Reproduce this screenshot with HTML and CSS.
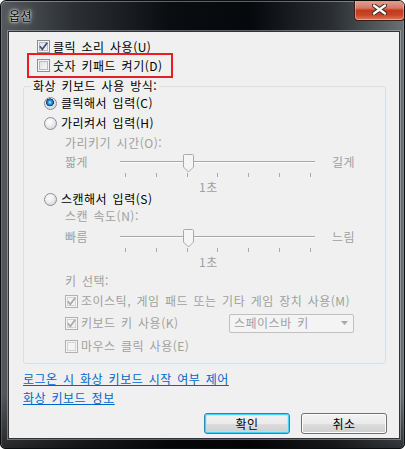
FILE: index.html
```html
<!DOCTYPE html>
<html lang="ko">
<head>
    <meta charset="UTF-8">
    <title>옵션</title>
    <link rel="stylesheet" href="styles.css">
</head>
<body>

    <div class="window">
        <div class="titlebar">
            <span class="title">옵션</span>
            <button class="close" type="button">
                <svg width="15" height="11" viewBox="0 0 15 11">
                    <path d="M2 1.5 L13 9.5 M13 1.5 L2 9.5" stroke="#3a2a28" stroke-width="4.4" stroke-linecap="round"/>
                    <path d="M2 1.5 L13 9.5 M13 1.5 L2 9.5" stroke="#ffffff" stroke-width="2.4" stroke-linecap="round"/>
                </svg>
            </button>
        </div>

        <div class="client">
            <div class="cb-row first">
                <span class="box"><svg width="11" height="11" viewBox="0 0 11 11"><path d="M1.8 5.2 L4.3 8.3 L9.2 1.8" class="tick"/></svg></span>
                <span>클릭 소리 사용(U)</span>
            </div>

            <div class="highlight">
                <span class="box"></span>
                <span>숫자 키패드 켜기(D)</span>
            </div>

            <fieldset class="group">
                <legend>화상 키보드 사용 방식:</legend>

                <div class="radio-row">
                    <span class="radio on"></span>
                    <span>클릭해서 입력(C)</span>
                </div>
                <div class="radio-row">
                    <span class="radio"></span>
                    <span>가리켜서 입력(H)</span>
                </div>
                <div class="sub label-row">가리키기 시간(O):</div>
                <div class="sub slider-row">
                    <span class="end-label">짧게</span>
                    <div class="track">
                        <svg class="thumb" width="11" height="19" viewBox="0 0 11 19">
                            <path d="M1.5 0.5 H9.5 Q10.5 0.5 10.5 1.5 V13 L5.5 18 L0.5 13 V1.5 Q0.5 0.5 1.5 0.5 Z" fill="#f5f5f5" stroke="#a9a9a9"/>
                        </svg>
                    </div>
                    <span class="end-label right">길게</span>
                </div>
                <div class="ticks"><i></i><i></i><i></i><i></i><i></i><i></i><i></i></div>
                <div class="value">1초</div>

                <div class="radio-row short">
                    <span class="radio"></span>
                    <span>스캔해서 입력(S)</span>
                </div>
                <div class="sub label-row tall">스캔 속도(N):</div>
                <div class="sub slider-row">
                    <span class="end-label">빠름</span>
                    <div class="track">
                        <svg class="thumb" width="11" height="19" viewBox="0 0 11 19">
                            <path d="M1.5 0.5 H9.5 Q10.5 0.5 10.5 1.5 V13 L5.5 18 L0.5 13 V1.5 Q0.5 0.5 1.5 0.5 Z" fill="#f5f5f5" stroke="#a9a9a9"/>
                        </svg>
                    </div>
                    <span class="end-label right">느림</span>
                </div>
                <div class="ticks"><i></i><i></i><i></i><i></i><i></i><i></i><i></i></div>
                <div class="value">1초</div>

                <div class="sub key-label">키 선택:</div>
                <div class="sub cb-row off joy">
                    <span class="box"><svg width="11" height="11" viewBox="0 0 11 11"><path d="M1.8 5.2 L4.3 8.3 L9.2 1.8" class="tick"/></svg></span>
                    <span>조이스틱, 게임 패드 또는 기타 게임 장치 사용(M)</span>
                </div>
                <div class="sub cb-row off kbd">
                    <span class="cb-part">
                        <span class="box"><svg width="11" height="11" viewBox="0 0 11 11"><path d="M1.8 5.2 L4.3 8.3 L9.2 1.8" class="tick"/></svg></span>
                        <span>키보드 키 사용(K)</span>
                    </span>
                    <div class="combo">
                        <span>스페이스바 키</span>
                        <svg width="7" height="4" viewBox="0 0 7 4"><path d="M0 0 H7 L3.5 4 Z" fill="#a8a8a8"/></svg>
                    </div>
                </div>
                <div class="sub cb-row off mouse">
                    <span class="box"></span>
                    <span>마우스 클릭 사용(E)</span>
                </div>
            </fieldset>

            <div class="links">
                <a href="#">로그온 시 화상 키보드 시작 여부 제어</a>
                <a href="#">화상 키보드 정보</a>
            </div>

            <div class="buttons">
                <button type="button" class="btn default">확인</button>
                <button type="button" class="btn">취소</button>
            </div>
        </div>
    </div>

</body>
</html>
```

FILE: styles.css
```css
body {
    margin: 0;
    background-color: #fff;
    font-family: "Noto Sans CJK KR", "Noto Sans", sans-serif;
    font-size: 12px;
    color: #000;
}
.window {
    width: 405px;
    height: 449px;
    box-sizing: border-box;
    border: 1px solid #0b0e11;
    border-radius: 6px 6px 5px 5px;
    background:
        linear-gradient(to bottom, rgba(0, 0, 0, 0) 88%, rgba(0, 0, 0, 0.55) 100%),
        linear-gradient(to right, #55595d 0%, #2c3034 18%, #0a0d10 42%, #06090c 62%, #2a2e32 82%, #6b7074 100%);
    box-shadow: inset 0 1px 0 rgba(255, 255, 255, 0.35), inset 1px 0 0 rgba(255, 255, 255, 0.15), inset -1px 0 0 rgba(255, 255, 255, 0.15);
    overflow: hidden;
}
.titlebar {
    height: 30px;
    display: flex;
    justify-content: space-between;
    align-items: flex-start;
}
.title {
    margin: 8px 0 0 8px;
    line-height: 14px;
    color: #000;
    text-shadow: 0 0 6px #c9ced2, 0 0 3px #e8eaec, 0 0 2px #ffffff;
    letter-spacing: 0.5px;
}
.close {
    width: 51px;
    height: 21px;
    margin: -1px -1px 0 0;
    padding: 0;
    border: 1px solid #3b1c16;
    border-top: none;
    border-radius: 0 0 4px 4px;
    background: linear-gradient(to bottom, #e3a497 0%, #d47a66 40%, #c2391c 52%, #c8452a 75%, #e0785a 100%);
    box-shadow: inset 0 0 0 1px rgba(255, 220, 210, 0.45);
    display: flex;
    align-items: center;
    justify-content: center;
}
.close svg {
    display: block;
    margin-top: -1px;
}

/* client area */
.client {
    height: 408px;
    margin: 0 4px 0 7px;
    box-sizing: border-box;
    border: 1px solid #2f3438;
    background-color: #f0f0f0;
    box-shadow: 0 0 0 1px rgba(200, 205, 210, 0.45);
    padding-top: 8px;
    letter-spacing: 0.5px;
    word-spacing: 1.6px;
}
.cb-row {
    display: flex;
    align-items: center;
    gap: 3px;
    height: 20px;
    line-height: 14px;
}
.cb-row.first {
    height: 13px;
    padding-left: 28px;
}
.highlight {
    margin-left: 18px;
    width: 146px;
    height: 25px;
    box-sizing: border-box;
    border: 2px solid #ec1c24;
    display: flex;
    align-items: center;
    gap: 3px;
    padding-left: 8px;
    line-height: 14px;
}
.box {
    flex: none;
    width: 13px;
    height: 13px;
    box-sizing: border-box;
    border: 1px solid #8e8f8f;
    background: linear-gradient(135deg, #d5d9de 0%, #eceef0 55%, #fbfbfb 100%);
    box-shadow: inset 0 0 0 1px #f4f4f4, inset 0 0 0 2px #b5babf;
}
.box svg {
    display: block;
}
.tick {
    fill: none;
    stroke: #3c4f8a;
    stroke-width: 1.7;
}
.off {
    color: #a0a0a0;
}
.off .box {
    border-color: #b1b1b1;
    background: #f4f4f4;
    box-shadow: inset 0 0 0 1px #f4f4f4, inset 0 0 0 2px #d3d3d3;
}
.off .tick {
    stroke: #a9a9a9;
}

/* group box */
.group {
    margin: 1px 0 0 14px;
    width: 363px;
    box-sizing: border-box;
    border: 1px solid #d5dfe5;
    border-radius: 3px;
    padding: 0 0 7px 0;
    min-width: 0;
}
.group legend {
    margin-left: 7px;
    padding: 0 2px;
    line-height: 14px;
}
.radio-row {
    display: flex;
    align-items: center;
    gap: 4px;
    height: 20px;
    padding-left: 20px;
    line-height: 14px;
}
.radio-row.short {
    height: 12px;
}
.radio {
    flex: none;
    width: 13px;
    height: 13px;
    box-sizing: border-box;
    border: 1px solid #8e8f8f;
    border-radius: 50%;
    background: radial-gradient(circle at 40% 35%, #ffffff 0%, #ececec 45%, #c9c9c9 100%);
}
.radio.on {
    background:
        radial-gradient(circle at 45% 40%, #b8ecff 0, #3aa2e6 1.6px, #1466ad 3px, #0d3f78 3.8px, rgba(0, 0, 0, 0) 4.2px),
        radial-gradient(circle at 40% 35%, #ffffff 0%, #e6e6e6 50%, #c9c9c9 100%);
}
.sub {
    padding-left: 41px;
}
.label-row {
    height: 19px;
    line-height: 19px;
    color: #a0a0a0;
}
.label-row.tall {
    height: 22px;
    line-height: 22px;
}
.slider-row {
    display: flex;
    align-items: center;
    height: 20px;
    line-height: 14px;
    color: #a0a0a0;
}
.end-label {
    width: 55px;
}
.end-label.right {
    width: auto;
    margin-left: 17px;
}
.track {
    position: relative;
    width: 195px;
    height: 20px;
}
.track::before {
    content: "";
    display: block;
    margin-top: 9px;
    height: 1px;
    background-color: #a8a8a8;
    border-bottom: 1px solid #fcfcfc;
}
.thumb {
    position: absolute;
    left: 63px;
    top: 2px;
}
.ticks {
    display: flex;
    justify-content: space-between;
    width: 186px;
    height: 5px;
    margin-left: 101px;
}
.ticks i {
    width: 1px;
    height: 4px;
    margin-top: 1px;
    background-color: #a9a9a9;
}
.value {
    margin-top: 3px;
    height: 13px;
    line-height: 13px;
    padding-left: 175px;
    color: #a0a0a0;
}
.key-label {
    margin-top: 6px;
    height: 14px;
    line-height: 14px;
    color: #a0a0a0;
}
.joy {
    margin-top: 3px;
}
.kbd {
    margin-top: 2px;
}
.mouse {
    margin-top: 3px;
}
.cb-part {
    display: flex;
    align-items: center;
    gap: 3px;
    width: 161px;
}
.combo {
    width: 125px;
    height: 19px;
    box-sizing: border-box;
    border: 1px solid #c0c0c0;
    border-radius: 2px;
    background-color: #f4f4f4;
    display: flex;
    align-items: center;
    justify-content: space-between;
    padding: 0 5px 0 4px;
    color: #a0a0a0;
}
.combo svg {
    display: block;
}

/* links */
.links {
    display: flex;
    flex-direction: column;
    align-items: flex-start;
    gap: 5px;
    margin: 8px 0 0 14px;
    line-height: 14px;
}
.links a {
    color: #0066cc;
    text-decoration: underline;
    text-underline-offset: 1px;
}

/* buttons */
.buttons {
    display: flex;
    justify-content: flex-end;
    gap: 11px;
    margin-top: 8px;
    padding-right: 12px;
}
.btn {
    width: 86px;
    height: 21px;
    padding: 0;
    border: 1px solid #707070;
    border-radius: 3px;
    background: linear-gradient(to bottom, #f2f2f2 0%, #ebebeb 50%, #dddddd 51%, #cfcfcf 100%);
    box-shadow: inset 0 0 0 1px #fcfcfc;
    font-family: "Noto Sans CJK KR", "Noto Sans", sans-serif;
    font-size: 12px;
    letter-spacing: 0.5px;
    line-height: 14px;
    color: #000;
}
.btn.default {
    border-color: #3c7fb1;
    box-shadow: inset 0 0 0 1px #48d0f6, inset 0 0 0 2px rgba(170, 230, 250, 0.6);
}
```
